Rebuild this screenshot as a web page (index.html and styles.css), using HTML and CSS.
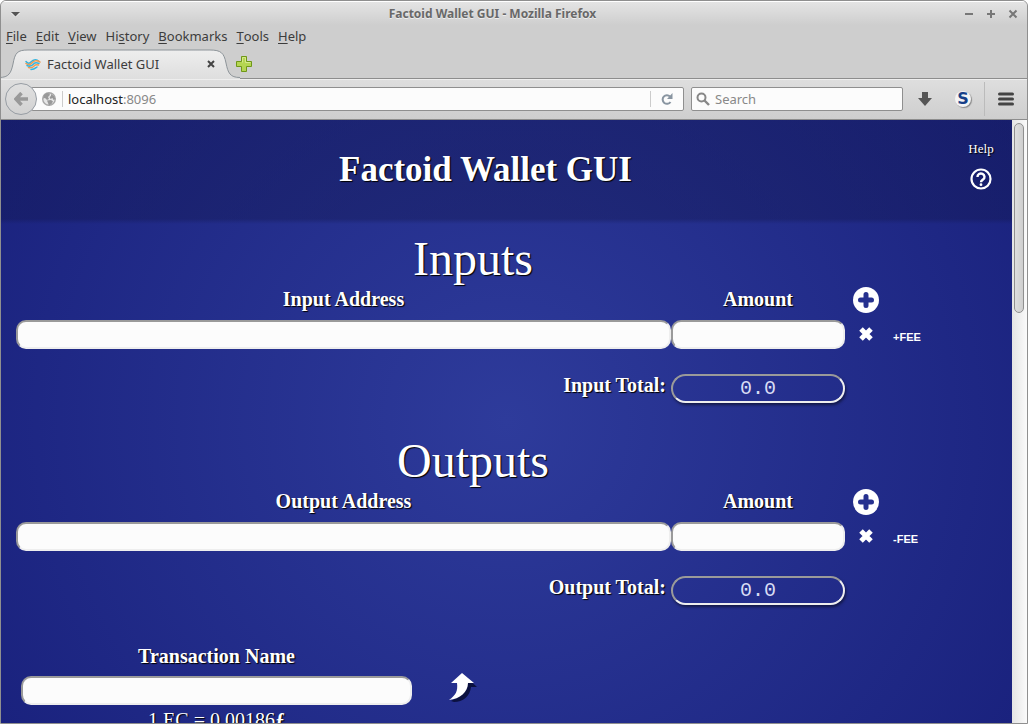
FILE: index.html
```html
<!DOCTYPE html>
<html lang="en">
<head>
<meta charset="utf-8">
<title>Factoid Wallet GUI</title>
<link rel="stylesheet" href="styles.css">
</head>
<body>
<div class="window">
  <header class="titlebar">
    <svg class="title-menu" width="28" height="24" viewBox="0 0 28 24"><path d="M10 11h9l-4.500 4z" fill="#fff"/><path d="M10 10h9l-4.500 4.500z" fill="#555"/></svg>
    <span class="title-text">Factoid Wallet GUI - Mozilla Firefox</span>
    <div class="title-buttons">
      <button class="plain" aria-label="Minimize"><svg width="10" height="10" viewBox="0 0 10 10"><path d="M1 5h8" stroke="#777" stroke-width="2"/></svg></button>
      <button class="plain" aria-label="Maximize"><svg width="10" height="10" viewBox="0 0 10 10"><path d="M1 5h8M5 1v8" stroke="#777" stroke-width="2"/></svg></button>
      <button class="plain" aria-label="Close"><svg width="10" height="10" viewBox="0 0 10 10"><path d="M1.500 1.500l7 7M8.500 1.500l-7 7" stroke="#777" stroke-width="2"/></svg></button>
    </div>
  </header>
  <nav class="menubar">
    <button class="plain"><u>F</u>ile</button>
    <button class="plain"><u>E</u>dit</button>
    <button class="plain"><u>V</u>iew</button>
    <button class="plain">Hi<u>s</u>tory</button>
    <button class="plain"><u>B</u>ookmarks</button>
    <button class="plain"><u>T</u>ools</button>
    <button class="plain"><u>H</u>elp</button>
  </nav>
  <div class="tabs">
    <div class="tab">
      <svg class="tab-shape" width="244" height="30" viewBox="0 0 244 30"><defs><linearGradient id="tabfill" x1="0" y1="0" x2="0" y2="1"><stop offset="0" stop-color="#eee"/><stop offset="1" stop-color="#dedede"/></linearGradient></defs><path d="M3 28.500C13 28.500 15 24 17 15C19 4 21 1 32 1H214C225 1 228 4 230 14C232 24 234 28.500 244 28.500V30H3z" fill="url(#tabfill)"/><path d="M3 28.500C13 28.500 15 24 17 15C19 4 21 1 32 1H214C225 1 228 4 230 14C232 24 234 28.500 244 28.500" fill="none" stroke="#8d9499"/></svg>
      <svg class="favicon" width="16" height="16" viewBox="0 0 16 16"><g fill="none" stroke-width="1.500" stroke-linecap="round"><path d="M1 5.500c3 4 5 0 7-1s4-1 6 1" stroke="#34b5df"/><path d="M1 7.500c4 3 6-.5 7-1.500s4-2 7 0" stroke="#f09a50"/><path d="M2 9.500c4 2 6-1 7-2s3-1 5 0" stroke="#34b5df"/><path d="M3.500 11.500c4 1 5-1 6-2s2-1 4-.5" stroke="#f09a50"/><path d="M6 13.500c3 0 4-1 6-2.500" stroke="#34b5df"/></g></svg>
      <span class="tab-title">Factoid Wallet GUI</span>
      <button class="plain tab-close" aria-label="Close tab"><svg width="8" height="8" viewBox="0 0 8 8"><path d="M1 1l6 6M7 1L1 7" stroke="#444" stroke-width="2"/></svg></button>
    </div>
    <button class="plain new-tab" aria-label="New tab"><svg width="16" height="16" viewBox="0 0 16 16"><path d="M5.500.5h5v5h5v5h-5v5h-5v-5h-5v-5h5z" fill="#b5d552" stroke="#6f9718"/><path d="M6.500 6.500v-5h3v5h5" fill="none" stroke="#d4e98c"/></svg></button>
  </div>
  <div class="toolbar">
    <button class="plain back" aria-label="Back"><svg width="14" height="14" viewBox="0 0 14 14"><path d="M7.500 1L2 7l5.500 6M2 7h12" fill="none" stroke="#999" stroke-width="3.500"/></svg></button>
    <div class="urlbar">
      <svg width="14" height="14" viewBox="0 0 14 14"><circle cx="7" cy="7" r="6.300" fill="#e6e6e6" stroke="#a8a8a8" stroke-width="1.400"/><path d="M2 3l3-2 3 .5-.5 2L6 5l1 2-2 1-2-2-2 .5zM9 2l3 2 1.500 3-2 1-1-2-2 1-1-2 1.500-1zM5 8.500l4-.5 2 1.500-1.500 2.500L7 13.500z" fill="#999"/></svg>
      <span class="url-sep"></span>
      <div class="url" role="textbox" aria-label="Address">localhost<span>:8096</span></div>
      <span class="url-sep"></span>
      <button class="plain reload" aria-label="Reload"><svg width="12" height="12" viewBox="0 0 12 12"><path d="M9 3.500A4.300 4.300 0 1 0 9.500 9" fill="none" stroke="#8995a1" stroke-width="2"/><path d="M11.500 0v6H6z" fill="#8995a1"/></svg></button>
    </div>
    <label class="search"><svg width="14" height="14" viewBox="0 0 14 14"><circle cx="5.500" cy="5.500" r="4" fill="none" stroke="#888" stroke-width="2"/><path d="M8.500 8.500l4.500 4.500" stroke="#888" stroke-width="2.400"/></svg><input type="text" placeholder="Search" aria-label="Search"></label>
    <div class="tools">
      <button class="plain" aria-label="Downloads"><svg width="14" height="14" viewBox="0 0 14 14"><path d="M4 0h6v6h4l-7 8-7-8h4z" fill="#555"/></svg></button>
      <button class="plain sbadge" aria-label="Add-on">S</button>
      <span class="tool-sep"></span>
      <button class="plain" aria-label="Menu"><svg width="16" height="14" viewBox="0 0 16 14"><path d="M1.500 2h13M1.500 7h13M1.500 12h13" stroke="#444" stroke-width="3" stroke-linecap="round"/></svg></button>
    </div>
  </div>
  <div class="viewport">
    <main class="page">
      <header class="banner">
        <h1>Factoid Wallet GUI</h1>
        <a class="help" href="#help">Help
          <svg width="22" height="22" viewBox="0 0 22 22"><circle cx="11" cy="11" r="9.500" fill="none" stroke="#fff" stroke-width="2.200"/><path d="M7.500 9a3.500 3.300 0 1 1 5.500 2.500c-1.300 1-2 1.200-2 2.700" fill="none" stroke="#fff" stroke-width="2.400"/><circle cx="11" cy="16.700" r="1.400" fill="#fff"/></svg>
        </a>
      </header>
      <section class="group">
        <h2>Inputs</h2>
        <div class="row head">
          <label for="in-address">Input Address</label><label for="in-amount">Amount</label>
          <button class="plain" aria-label="Add input"><svg width="26" height="26" viewBox="0 0 26 26"><circle cx="13" cy="13" r="13" fill="#fff"/><path d="M13 7.500v11M7.500 13h11" stroke="#26318f" stroke-width="5" stroke-linecap="round"/></svg></button>
        </div>
        <div class="row fields">
          <input id="in-address" type="text"><input id="in-amount" type="text">
          <button class="plain" aria-label="Remove input"><svg width="16" height="16" viewBox="0 0 16 16"><path d="M3 3l10 10M13 3L3 13" stroke="#fff" stroke-width="5"/></svg></button>
          <button class="plain fee">+FEE</button>
        </div>
        <div class="row total"><label for="in-total">Input Total:</label><input id="in-total" type="text" value="0.0" readonly></div>
      </section>
      <section class="group">
        <h2>Outputs</h2>
        <div class="row head">
          <label for="out-address">Output Address</label><label for="out-amount">Amount</label>
          <button class="plain" aria-label="Add output"><svg width="26" height="26" viewBox="0 0 26 26"><circle cx="13" cy="13" r="13" fill="#fff"/><path d="M13 7.500v11M7.500 13h11" stroke="#26318f" stroke-width="5" stroke-linecap="round"/></svg></button>
        </div>
        <div class="row fields">
          <input id="out-address" type="text"><input id="out-amount" type="text">
          <button class="plain" aria-label="Remove output"><svg width="16" height="16" viewBox="0 0 16 16"><path d="M3 3l10 10M13 3L3 13" stroke="#fff" stroke-width="5"/></svg></button>
          <button class="plain fee">-FEE</button>
        </div>
        <div class="row total"><label for="out-total">Output Total:</label><input id="out-total" type="text" value="0.0" readonly></div>
      </section>
      <section class="transaction">
        <div class="name">
          <label for="tx-name">Transaction Name</label>
          <input id="tx-name" type="text">
          <p>1 EC = 0.00186<b>ƒ</b></p>
        </div>
        <button class="plain send" aria-label="Load transaction"><svg width="30" height="32" viewBox="0 0 30 32"><path d="M17 4l12 11h-6c-1 9-8 15-17 15l-3-1c7-3 9-7 9-15z" fill="#0b1140"/><path d="M14 1l12 10h-6c0 9-8 16-19 17c7-5 9-9 8-17H3z" fill="#fff"/></svg></button>
      </section>
    </main>
    <div class="scrollbar"><div class="thumb"></div></div>
  </div>
</div>
</body>
</html>
```
FILE: styles.css
```css
* { box-sizing: border-box; }
body { margin: 0; background: #fff; font: 13px "Noto Sans", sans-serif; color: #3c3c3c; }
svg { display: block; flex: none; }
.plain { display: flex; align-items: center; justify-content: center; padding: 0; border: 0; background: none; color: inherit; font: inherit; }

.window { display: flex; flex-direction: column; height: 100vh; overflow: hidden; border: 1px solid #8f8f8f; border-radius: 6px 6px 0 0; background: #cecece; }
.titlebar { display: flex; align-items: center; height: 24px; flex: none; border-top: 1px solid #fff; background: linear-gradient(#e4e4e4, #cecece); }
.title-menu, .title-buttons { flex: none; }
.title-text { flex: 1; padding-right: 8px; text-align: center; font: bold 12px/24px "Noto Sans", sans-serif; color: #686868; text-shadow: 0 1px #eee; }
.title-buttons { display: flex; gap: 12px; padding-right: 9px; }
.menubar { display: flex; gap: 9px; height: 24px; flex: none; padding: 0 5px 2px; }
.menubar u { text-underline-offset: 2px; }

.tabs { display: flex; align-items: center; height: 30px; flex: none; border-bottom: 1px solid #8d8d8d; }
.tab { position: relative; display: flex; align-items: center; width: 235px; height: 30px; padding: 0 21px 0 24px; }
.tab-shape { position: absolute; left: -5px; top: 0; }
.favicon, .tab-title, .tab-close { position: relative; }
.tab-title { flex: 1; padding-left: 6px; line-height: 30px; }
.tab-close { width: 8px; }

.toolbar { display: flex; align-items: center; height: 41px; flex: none; padding: 0 13px 2px 4px; border-top: 1px solid #eee; border-bottom: 1px solid #8d8d8d; background: linear-gradient(#dedede, #cecece); }
.back { z-index: 1; width: 32px; height: 32px; flex: none; border: 1px solid #979da4; border-radius: 50%; background: linear-gradient(#e0e0e0, #d2d2d2); }
.urlbar, .search { display: flex; align-items: center; height: 24px; border: 1px solid #8f8f8f; border-radius: 2px; background: #fcfcfc; }
.urlbar { flex: 1; margin-left: -6px; padding-left: 10px; }
.url-sep { width: 1px; height: 16px; margin-left: 6px; background: #ccc; }
.url { flex: 1; padding-left: 5px; color: #222; line-height: 22px; }
.url span { color: #888; }
.reload { width: 32px; }
.search { width: 212px; margin-left: 7px; padding-left: 4px; }
.search input { width: 100%; min-width: 0; margin-left: 5px; padding: 0; border: 0; outline: 0; background: none; font: inherit; }
.search input::placeholder { color: #888; opacity: 1; }
.tools { display: flex; align-items: center; padding-left: 15px; }
.sbadge { width: 16px; height: 16px; margin-left: 23px; border-radius: 50%; background: #f4f4f4; box-shadow: 1px 1px 1px #888; color: #163f88; font: bold 16px "DejaVu Sans", sans-serif; }
.tool-sep { width: 1px; height: 34px; margin: 0 13px; background: #bbb; }

.viewport { display: flex; flex: 1; min-height: 0; }
.page { flex: 1; min-width: 0; overflow: hidden; background: radial-gradient(circle farthest-corner at 50% 50%, #2e3b9b, #1a227e); color: #fff; font: 20px "Liberation Serif", serif; text-shadow: 1px 1px 1px #000; }
.banner { display: flex; height: 104px; padding-right: 18px; background: linear-gradient(rgba(18, 23, 80, .4) 95%, transparent); }
.banner h1 { flex: 1; margin: 0; padding-left: 2px; text-align: center; font: bold 35px/100px "Liberation Serif", serif; text-shadow: 1px 1px 1px #000; }
.help { display: flex; flex-direction: column; align-items: center; gap: 10px; width: 26px; padding-top: 20px; color: #fff; font-size: 13px; line-height: 18px; text-decoration: none; }

.group { height: 202px; padding: 8px 0 0 15px; }
.group h2 { margin: 0 82px 0 0; text-align: center; font: 48px/54px "Liberation Serif", serif; text-shadow: 1px 1px 1px #000; }
.row { display: grid; grid-template-columns: 1fr 174px 42px 125px; align-items: center; }
.head, .total, .transaction label { font-weight: bold; text-align: center; }
.head { height: 28px; }
.head label { padding-bottom: 2px; }
.fields { height: 30px; margin-top: 5px; }
.fields .fee { justify-content: flex-start; padding: 5px 0 0 6px; font: bold 11px "Liberation Sans", sans-serif; text-shadow: none; }
.page input { width: 100%; min-width: 0; height: 29px; border: 2px inset #eee; border-radius: 10px; background: #fcfcfc; font: 20px "Liberation Mono", monospace; }
.total { margin-top: 25px; }
.total label { padding-right: 5px; text-align: right; line-height: 22px; align-self: start; }
.page .total input { border-radius: 15px; background: none; color: #d8dcf4; text-align: center; box-shadow: 1px 2px 3px rgba(0, 0, 0, .5); }

.transaction { display: flex; align-items: flex-start; padding: 15px 0 0 20px; }
.name { display: flex; flex-direction: column; width: 391px; line-height: 26px; text-align: center; }
.name input { margin-top: 7px; }
.name p { margin: 2px 0 0; }
.send { margin: 29px 0 0 36px; }

.scrollbar { width: 15px; flex: none; padding: 3px 3px 0 2px; background: linear-gradient(to right, #e4e4e4, #fafafa); }
.thumb { width: 10px; height: 190px; border: 1px solid #8f8f8f; border-radius: 5px; background: linear-gradient(to right, #dedede, #cecece); }
```
